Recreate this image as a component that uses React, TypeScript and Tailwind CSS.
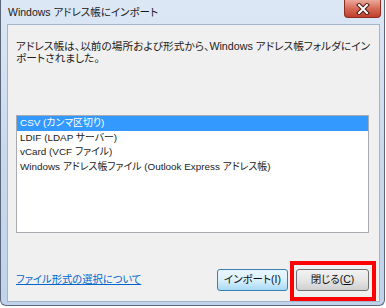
export default function App() {
  const rows = [
    "CSV (カンマ区切り)",
    "LDIF (LDAP サーバー)",
    "vCard (VCF ファイル)",
    "Windows アドレス帳ファイル (Outlook Express アドレス帳)",
  ];
  return (
    <div className="w-[386px] h-[308px] bg-white [font-family:'Liberation_Sans','Noto_Sans_CJK_JP',sans-serif] [font-feature-settings:'palt']">
      <div className="relative flex flex-col w-[385px] h-[306px] border-x border-b border-[#5b6779] rounded-b-[6px] bg-gradient-to-b from-[#dde8f5] via-[#c9d9ed] to-[#c0d3ea]">
        <div className="flex h-[24px] items-start justify-between">
          <div className="pl-[7px] pt-[4px] text-[10.5px] leading-[16px] text-[#1a1a1a] whitespace-nowrap">
            Windows アドレス帳にインポート
          </div>
          <div className="mr-[3px] flex h-[18px] w-[37px] items-center justify-center rounded-b-[4px] border border-t-0 border-[#8a2e22] bg-gradient-to-b from-[#eaa99b] via-[#d66a58] to-[#c23c2b]">
            <svg width="14" height="12" viewBox="0 0 14 12">
              <path d="M3 2 L11 10 M11 2 L3 10" stroke="#4a1a14" strokeWidth="4" strokeLinecap="square" />
              <path d="M3 2 L11 10 M11 2 L3 10" stroke="#ffffff" strokeWidth="2" strokeLinecap="square" />
            </svg>
          </div>
        </div>
        <div className="flex flex-1 flex-col ml-[6px] mr-[4px] mb-[3px] border border-[#a3b5cb] bg-[#f0f0f0]">
          <p className="pl-[8px] pt-[15px] text-[10.7px] leading-[12px] text-[#222] whitespace-nowrap">
            アドレス帳は、以前の場所および形式から、Windows アドレス帳フォルダにイン
            <br />
            ポートされました。
          </p>
          <div className="ml-[8px] mt-[51px] h-[118px] w-[353px] border border-[#a9abb0] bg-white">
            {rows.map((r, i) => (
              <div
                key={r}
                className={
                  i === 0
                    ? "h-[14.5px] pl-[3px] text-[9.9px] leading-[14.5px] text-white bg-[#3399ff] whitespace-nowrap"
                    : "h-[14.5px] pl-[3px] text-[9.9px] leading-[14.5px] text-[#222] whitespace-nowrap"
                }
              >
                {r}
              </div>
            ))}
          </div>
          <div className="mt-[36px] flex items-center justify-between pl-[8px] pr-[10px]">
            <a className="text-[10.3px] leading-[14px] text-[#0066cc] underline whitespace-nowrap">
              ファイル形式の選択について
            </a>
            <div className="flex gap-[8px]">
              <button className="flex h-[22px] w-[71px] items-center justify-center rounded-[3px] border border-[#3c7fb1] bg-gradient-to-b from-[#eaf6fd] via-[#d9f0fc] to-[#a7d9f5] text-[10.5px] text-[#111] whitespace-nowrap">
                インポート(I)
              </button>
              <button className="flex h-[22px] w-[73px] items-center justify-center rounded-[3px] border border-[#707070] bg-gradient-to-b from-[#f2f2f2] via-[#e6e6e6] to-[#cfcfcf] text-[10.5px] text-[#111] whitespace-nowrap">
                閉じる(<span className="underline">C</span>)
              </button>
            </div>
          </div>
        </div>
        <div className="absolute left-[289px] top-[261px] h-[40px] w-[86px] border-[4px] border-[#ff0000]" />
      </div>
    </div>
  );
}
